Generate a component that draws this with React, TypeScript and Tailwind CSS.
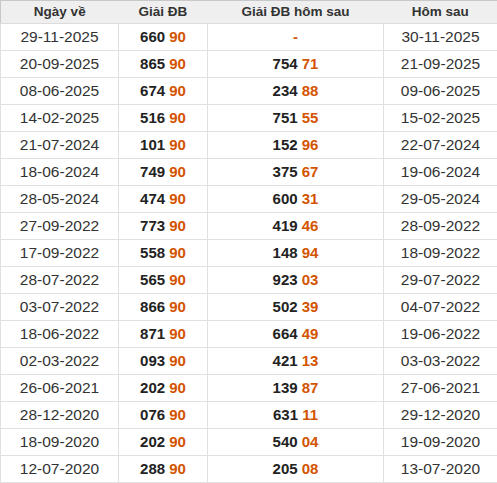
const rows: [string, string, string, string][] = [
  ['29-11-2025', '660 90', '-', '30-11-2025'],
  ['20-09-2025', '865 90', '754 71', '21-09-2025'],
  ['08-06-2025', '674 90', '234 88', '09-06-2025'],
  ['14-02-2025', '516 90', '751 55', '15-02-2025'],
  ['21-07-2024', '101 90', '152 96', '22-07-2024'],
  ['18-06-2024', '749 90', '375 67', '19-06-2024'],
  ['28-05-2024', '474 90', '600 31', '29-05-2024'],
  ['27-09-2022', '773 90', '419 46', '28-09-2022'],
  ['17-09-2022', '558 90', '148 94', '18-09-2022'],
  ['28-07-2022', '565 90', '923 03', '29-07-2022'],
  ['03-07-2022', '866 90', '502 39', '04-07-2022'],
  ['18-06-2022', '871 90', '664 49', '19-06-2022'],
  ['02-03-2022', '093 90', '421 13', '03-03-2022'],
  ['26-06-2021', '202 90', '139 87', '27-06-2021'],
  ['28-12-2020', '076 90', '631 11', '29-12-2020'],
  ['18-09-2020', '202 90', '540 04', '19-09-2020'],
  ['12-07-2020', '288 90', '205 08', '13-07-2020'],
];

function Prize({ value }: { value: string }) {
  if (value === '-') return <span className="text-[#d35400]">-</span>;
  const [head, tail] = value.split(' ');
  return (
    <>
      <span className="text-[#222]">{head}</span>{' '}
      <span className="text-[#d35400]">{tail}</span>
    </>
  );
}

export default function App() {
  return (
    <div className="w-[497px] bg-white font-['Liberation_Sans',Arial,sans-serif] text-[#333]">
      <table className="w-[497px] table-fixed border-collapse border border-[#c8c8c8]">
        <colgroup>
          <col className="w-[118px]" />
          <col className="w-[89px]" />
          <col className="w-[176px]" />
          <col className="w-[114px]" />
        </colgroup>
        <thead>
          <tr className="h-[23px] bg-[#efefef] text-[13.5px] font-bold">
            <th className="border-b border-[#dcdcdc] p-0 text-center">Ngày về</th>
            <th className="border-b border-[#dcdcdc] p-0 text-center">Giải ĐB</th>
            <th className="border-b border-[#dcdcdc] p-0 text-center">Giải ĐB hôm sau</th>
            <th className="border-b border-[#dcdcdc] p-0 text-center">Hôm sau</th>
          </tr>
        </thead>
        <tbody>
          {rows.map(([date, prize, next, nextDate]) => (
            <tr key={date} className="h-[27px]">
              <td className="border border-[#e0e0e0] p-0 text-center text-[15.5px]">{date}</td>
              <td className="border border-[#e0e0e0] p-0 text-center text-[15px] font-bold">
                <Prize value={prize} />
              </td>
              <td className="border border-[#e0e0e0] p-0 text-center text-[15px] font-bold">
                <Prize value={next} />
              </td>
              <td className="border border-[#e0e0e0] p-0 text-center text-[15.5px]">{nextDate}</td>
            </tr>
          ))}
        </tbody>
      </table>
    </div>
  );
}
